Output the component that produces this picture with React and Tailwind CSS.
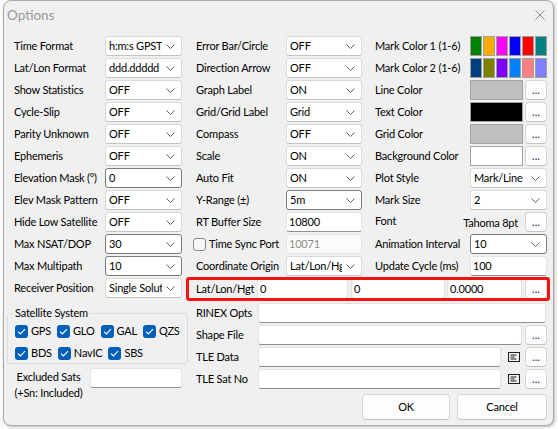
// Options dialog (plot settings) recreated as a static React + Tailwind view.

import React from 'react';

// combo-box arrow
const Chevron = () => (
  <svg width="9" height="5" viewBox="0 0 9 5" className="shrink-0">
    <path d="M0.5 0.5 L4.5 4.5 L8.5 0.5" fill="none" stroke="#606060" strokeWidth="1" />
  </svg>
);

function Combo({ value, editable = false, w = 'w-[77px]' }) {
  return (
    <div
      className={`${w} h-[20px] shrink-0 bg-white rounded-[3px] border flex items-center pl-[3px] pr-[6px] ${
        editable ? 'border-[#7a7a7a]' : 'border-[#dadada] border-b-[#c2c2c2]'
      }`}
    >
      <span className="flex-1 min-w-0 overflow-hidden whitespace-nowrap mr-[4px]">{value}</span>
      <Chevron />
    </div>
  );
}

function TextBox({ value = '', w = 'w-[77px]', disabled = false }) {
  return (
    <div
      className={`${w} h-[20px] shrink-0 rounded-[3px] border border-[#e3e3e3] border-b-[#8f8f8f] flex items-center pl-[2px] whitespace-nowrap overflow-hidden ${
        disabled ? 'bg-[#fbfbfb] text-[#8d8d8d] border-b-[#e3e3e3]' : 'bg-white'
      }`}
    >
      {value}
    </div>
  );
}

const Dots = () => (
  <div className="w-[22px] h-[20px] shrink-0 bg-[#fdfdfd] border border-[#d6d6d6] border-b-[#c4c4c4] rounded-[4px] flex items-center justify-center text-[#2a1f5c] leading-none pb-[1px] tracking-normal">
    ...
  </div>
);

const Row = ({ label, children }) => (
  <div className="flex items-center h-[20px]">
    <span className="flex-1 min-w-0 whitespace-nowrap">{label}</span>
    {children}
  </div>
);

function Check({ on = true }) {
  if (!on) {
    return <div className="w-[13px] h-[13px] shrink-0 rounded-[3px] border border-[#8a8a8a] bg-[#f6f6f6]" />;
  }
  return (
    <div className="w-[13px] h-[13px] shrink-0 rounded-[3px] bg-[#005fb8] flex items-center justify-center">
      <svg width="9" height="7" viewBox="0 0 9 7">
        <path d="M1 3.6 L3.4 6 L8 1.2" fill="none" stroke="#fff" strokeWidth="1.2" />
      </svg>
    </div>
  );
}

const SatItem = ({ name }) => (
  <div className="flex items-center gap-[3px] h-[14px]">
    <Check />
    <span>{name}</span>
  </div>
);

const ColorBox = ({ color }) => (
  <div className="flex gap-[2px] shrink-0">
    <div className="w-[53px] h-[20px] border border-[#a3a3a3]" style={{ background: color }} />
    <Dots />
  </div>
);

const Swatches = ({ colors }) => (
  <div className="flex gap-[1px] w-[77px] shrink-0">
    {colors.map((c) => (
      <div key={c} className="w-[12px] h-[20px] shrink-0 border border-[#a0a0a0]" style={{ background: c }} />
    ))}
  </div>
);

const NoteIcon = () => (
  <svg width="12" height="10" viewBox="0 0 12 10">
    <rect x="0.5" y="0.5" width="11" height="9" fill="none" stroke="#1e1e1e" />
    <path d="M2.5 3 H8.5 M2.5 5 H6.5 M2.5 7 H8.5" stroke="#1e1e1e" strokeWidth="1" />
  </svg>
);

export default function App() {
  const col1 = [
    ['Time Format', <Combo key="a" value="h:m:s GPST" />],
    ['Lat/Lon Format', <Combo key="b" value="ddd.ddddd" />],
    ['Show Statistics', <Combo key="c" value="OFF" />],
    ['Cycle-Slip', <Combo key="d" value="OFF" />],
    ['Parity Unknown', <Combo key="e" value="OFF" />],
    ['Ephemeris', <Combo key="f" value="OFF" />],
    ['Elevation Mask (°)', <Combo key="g" value="0" editable />],
    ['Elev Mask Pattern', <Combo key="h" value="OFF" />],
    ['Hide Low Satellite', <Combo key="i" value="OFF" />],
    ['Max NSAT/DOP', <Combo key="j" value="30" editable />],
    ['Max Multipath', <Combo key="k" value="10" editable />],
    ['Receiver Position', <Combo key="l" value="Single Solution" />],
  ];

  const col2 = [
    ['Error Bar/Circle', <Combo key="a" value="OFF" w="w-[76px]" />],
    ['Direction Arrow', <Combo key="b" value="OFF" w="w-[76px]" />],
    ['Graph Label', <Combo key="c" value="ON" w="w-[76px]" />],
    ['Grid/Grid Label', <Combo key="d" value="Grid" w="w-[76px]" />],
    ['Compass', <Combo key="e" value="OFF" w="w-[76px]" />],
    ['Scale', <Combo key="f" value="ON" w="w-[76px]" />],
    ['Auto Fit', <Combo key="g" value="ON" w="w-[76px]" />],
    ['Y-Range (±)', <Combo key="h" value="5m" editable w="w-[76px]" />],
    ['RT Buffer Size', <TextBox key="i" value="10800" w="w-[76px]" />],
  ];

  return (
    <div className="w-[558px] h-[429px] bg-[#fbfbfb] pl-[3px] overflow-hidden font-[family-name:Lato,'Liberation_Sans',sans-serif] text-[11px] tracking-[-0.2px] text-black">
      <div className="w-[551px] h-[426px] bg-[#f0f0f0] border border-[#a9a9a9] rounded-[8px] shadow-[1px_1px_3px_rgba(0,0,0,0.25)] flex flex-col">
        {/* title bar */}
        <div className="h-[27px] flex items-center justify-between pl-[3px] pr-[8px]">
          <span className="text-[13.5px] tracking-normal text-[#9a9a9a] pt-[1px]">Options</span>
          <svg width="10" height="10" viewBox="0 0 10 10">
            <path d="M0.5 0.5 L9.5 9.5 M9.5 0.5 L0.5 9.5" stroke="#8c8c8c" strokeWidth="1" />
          </svg>
        </div>

        <div className="flex pl-[3px] pt-[8px]">
          {/* left column */}
          <div className="w-[175px] flex flex-col">
            <div className="flex flex-col gap-[2px] pl-[7px]">
              {col1.map(([l, c]) => (
                <Row key={l} label={l}>{c}</Row>
              ))}
            </div>

            <fieldset className="mt-[8px] h-[58px] border border-[#dcdcdc] rounded-[3px] px-[7px]">
              <legend className="px-[1px] -ml-[1px] leading-[14px]">Satellite System</legend>
              <div className="flex gap-x-[6px] mt-[4px]">
                <SatItem name="GPS" />
                <SatItem name="GLO" />
                <SatItem name="GAL" />
                <SatItem name="QZS" />
              </div>
              <div className="flex gap-x-[6px] mt-[8px]">
                <SatItem name="BDS" />
                <SatItem name="NavIC" />
                <SatItem name="SBS" />
              </div>
            </fieldset>

            <div className="flex mt-[4px]">
              <div className="w-[83px] text-center leading-[16px] pt-[1px] whitespace-nowrap">
                Excluded Sats
                <br />
                (+Sn: Included)
              </div>
              <TextBox w="w-[92px]" />
            </div>
          </div>

          {/* right part */}
          <div className="w-[351px] ml-[14px] flex flex-col">
            <div className="flex gap-[13px]">
              <div className="w-[166px] flex flex-col gap-[2px]">
                {col2.map(([l, c]) => (
                  <Row key={l} label={l}>{c}</Row>
                ))}
                <div className="flex items-center h-[20px] -ml-[3px]">
                  <Check on={false} />
                  <span className="flex-1 ml-[3px] whitespace-nowrap">Time Sync Port</span>
                  <TextBox value="10071" w="w-[76px]" disabled />
                </div>
                <Row label="Coordinate Origin">
                  <Combo value="Lat/Lon/Hgt" w="w-[76px]" />
                </Row>
              </div>

              <div className="w-[172px] flex flex-col gap-[2px]">
                <Row label="Mark Color 1 (1-6)">
                  <Swatches colors={['#008000', '#ffaa00', '#ff00ff', '#0000ff', '#ff0000', '#008080']} />
                </Row>
                <Row label="Mark Color 2 (1-6)">
                  <Swatches colors={['#004080', '#808000', '#8000ff', '#0080ff', '#ff8080', '#8080ff']} />
                </Row>
                <Row label="Line Color"><ColorBox color="#c0c0c0" /></Row>
                <Row label="Text Color"><ColorBox color="#000000" /></Row>
                <Row label="Grid Color"><ColorBox color="#c0c0c0" /></Row>
                <Row label="Background Color"><ColorBox color="#ffffff" /></Row>
                <Row label="Plot Style"><Combo value="Mark/Line" /></Row>
                <Row label="Mark Size"><Combo value="2" /></Row>
                <div className="flex items-center h-[20px]">
                  <span className="flex-1 -mt-[2px]">Font</span>
                  <span className="mr-[7px] mt-[2px] whitespace-nowrap">Tahoma 8pt</span>
                  <Dots />
                </div>
                <Row label="Animation Interval"><Combo value="10" editable /></Row>
                <Row label="Update Cycle (ms)"><TextBox value="100" /></Row>
              </div>
            </div>

            {/* lat/lon/hgt with highlight */}
            <div className="relative flex items-center h-[20px] mt-[3px]">
              <span className="w-[61px] shrink-0 whitespace-nowrap">Lat/Lon/Hgt</span>
              <TextBox value="0" w="w-[91px]" />
              <div className="ml-[3px]"><TextBox value="0" w="w-[94px]" /></div>
              <div className="ml-[2px]"><TextBox value="0.0000" w="w-[75px]" /></div>
              <div className="ml-[3px]"><Dots /></div>
              <div className="absolute -left-[10px] -right-[3px] -top-[2px] -bottom-[2px] border-[3px] border-[#f01414] rounded-[3px] pointer-events-none" />
            </div>

            <div className="flex flex-col gap-[2px] mt-[4px]">
              <div className="flex items-center h-[20px]">
                <span className="w-[62px] shrink-0 whitespace-nowrap">RINEX Opts</span>
                <TextBox w="w-[288px]" />
              </div>
              <div className="flex items-center h-[20px]">
                <span className="w-[62px] shrink-0 whitespace-nowrap">Shape File</span>
                <TextBox w="w-[264px]" />
                <div className="ml-[3px]"><Dots /></div>
              </div>
              <div className="flex items-center h-[20px]">
                <span className="w-[62px] shrink-0 whitespace-nowrap">TLE Data</span>
                <TextBox w="w-[243px]" />
                <div className="w-[24px] flex justify-center pl-[1px]"><NoteIcon /></div>
                <Dots />
              </div>
              <div className="flex items-center h-[20px]">
                <span className="w-[62px] shrink-0 whitespace-nowrap">TLE Sat No</span>
                <TextBox w="w-[243px]" />
                <div className="w-[24px] flex justify-center pl-[1px]"><NoteIcon /></div>
                <Dots />
              </div>
            </div>

            <div className="flex justify-end gap-[7px] mt-[5px]">
              <button className="w-[88px] h-[26px] bg-[#fdfdfd] border border-[#d6d6d6] border-b-[#c2c2c2] rounded-[4px]">
                OK
              </button>
              <button className="w-[90px] h-[26px] bg-[#fdfdfd] border border-[#d6d6d6] border-b-[#c2c2c2] rounded-[4px]">
                Cancel
              </button>
            </div>
          </div>
        </div>
      </div>
    </div>
  );
}
